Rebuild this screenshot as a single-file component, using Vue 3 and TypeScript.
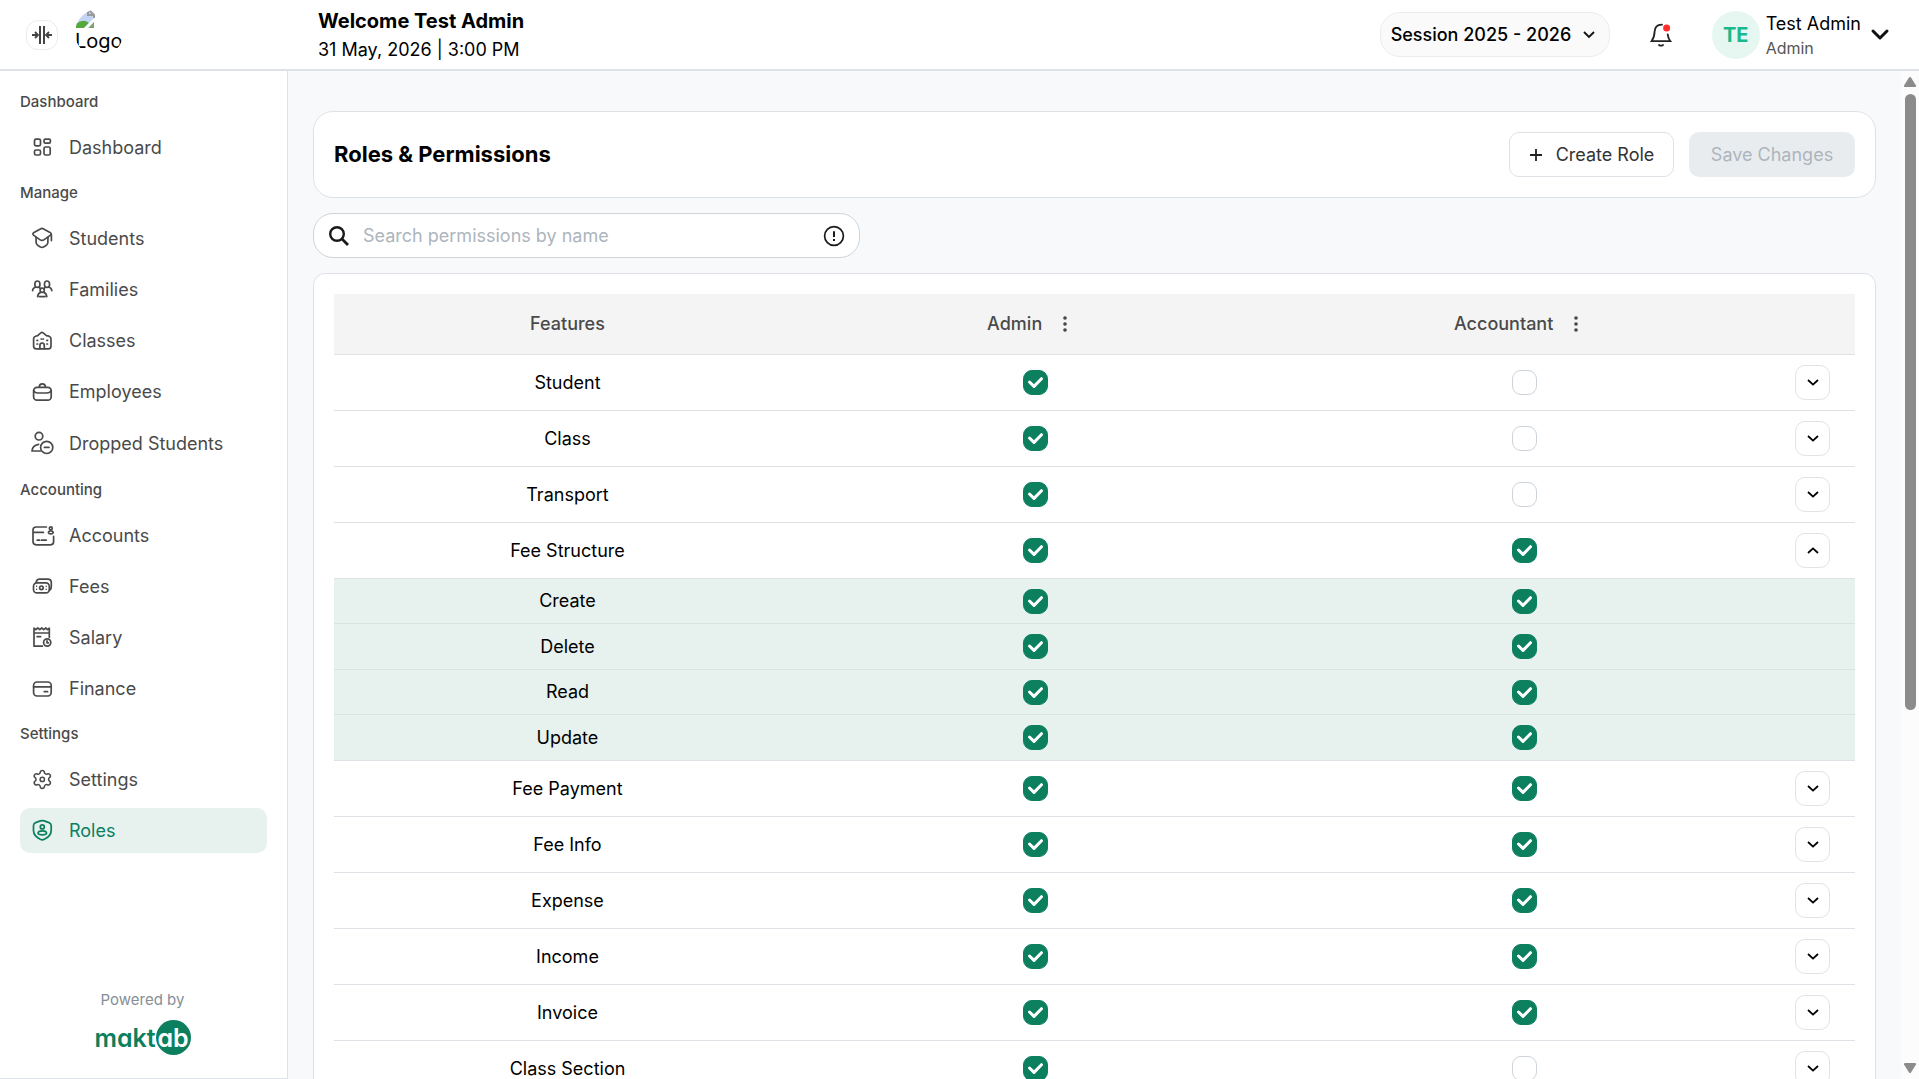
<script setup lang="ts">
import { computed, reactive, ref } from 'vue'

interface NavItem { label: string; icon: string; tall?: boolean; active?: boolean }
interface NavGroup { title: string; items: NavItem[] }
interface Action { name: string; admin: boolean; accountant: boolean }
interface Feature extends Action { open: boolean; actions: Action[] }

const icons: Record<string, string> = {
  dashboard:
    '<rect x="4.5" y="3.2" width="6" height="6.6" rx="1.6"/><rect x="14" y="3.2" width="6.4" height="4" rx="1.4"/><rect x="4.5" y="14" width="6" height="5" rx="1.5"/><rect x="14" y="11" width="6.2" height="8" rx="1.6"/>',
  students:
    '<path d="M10.4 1.9Q12 1 13.6 1.9L20 5.4Q22.2 6.8 20.2 8.4L14.2 12.6Q12 14.1 9.8 12.6L3.8 8.4Q1.9 6.8 4 5.4Z"/><path d="M6 10.4L6.2 16Q6.4 17.6 8 18.5L10.4 19.9Q12 20.7 13.6 19.9L16 18.5Q17.6 17.6 17.8 16L18 10.4M21.4 7.6V13.6"/>',
  families:
    '<path d="M4.9 7.4V5.7Q5 3 7.4 3T9.9 5.7V7.4Q9.6 9.4 7.4 9.4T4.9 7.4ZM14.5 7.4V5.7Q14.6 3 17 3T19.5 5.7V7.4Q19.2 9.4 17 9.4T14.5 7.4Z"/><circle cx="12.2" cy="12.2" r="2.1"/><path d="M2.6 12.6Q2.8 10 5.2 9.2M21.8 12.6Q21.6 10 19.2 9.2M9.3 9.4L10.4 10.6M15.1 9.4L14 10.6M7.6 18.6Q8 15.4 10.6 14.4M16.8 18.6Q16.4 15.4 13.8 14.4M9.4 18.6H15"/>',
  classes:
    '<path d="M7.6 6.6L10.8 3.9Q12 2.8 13.2 3.9L16.4 6.6L19 7.2Q21 7.8 21 9.8V17Q21 19.8 18.4 19.8H6.2Q3.6 19.8 3.6 17V9.8Q3.6 7.8 5.6 7.2Z"/><path d="M9.9 19.6V16.4Q10 14 12.1 14T14.3 16.4V19.6"/><path d="M7 11.4H7.6M7 15H7.6M16.9 11.4H17.5M16.9 15H17.5M11.1 10H11.5M13 10H13.4"/>',
  employees:
    '<rect x="3.6" y="7.4" width="17.6" height="12.8" rx="3.4"/><path d="M9.2 7.2Q9.2 3.8 12.3 3.8T15.5 7.2M3.8 10.6Q4.4 13 8 13H16.6Q20.4 13 21 10.6M10.4 13H14.2"/>',
  dropped:
    '<g transform="translate(0 -1)"><circle cx="9" cy="5.2" r="3.8"/><path d="M10.4 20H2Q2.2 14.4 8.6 13.3"/><circle cx="16.7" cy="16.4" r="6.1"/><path d="M14.4 16.4H19"/></g>',
  accounts:
    '<path d="M16.4 3H6.2Q3 3 3 6V17.6Q3 20.8 6.2 20.8H20.6Q23.6 20.8 23.6 17.8V12.4M3 8.4H13.4M7.2 16.2H9.6M11.6 16.2H16.2"/><circle cx="20.8" cy="4.3" r="1.5"/><path d="M18.4 8.6Q18.6 6.8 20.8 6.8T23.2 8.6Q23 9.9 20.8 9.9T18.4 8.6Z"/>',
  fees:
    '<rect x="3.5" y="7.8" width="15.8" height="10" rx="3.4"/><circle cx="11.4" cy="12.8" r="1.8"/><path d="M6.2 7.4Q6.6 4.2 9.6 4.2H17.8Q21.3 4.2 21.3 7.6V11.4Q21.2 14.6 19.4 15.2"/><path d="M6.6 11.2V11.4M6.6 14.2V14.4M16.2 11.2V11.4M16.2 14.2V14.4" stroke-width="1.3"/>',
  salary:
    '<path d="M12.4 20.2H4V2.2L5.8 3.6L7.8 2L9.8 3.6L11.8 2L13.8 3.6L15.8 2L17.6 3.6L19.3 2.2V11.2M4 7H19.3M7.2 10.7H10.6"/><circle cx="17.2" cy="16.5" r="3.6"/><path d="M17 14.8V16.8H18.4"/>',
  finance:
    '<rect x="3.6" y="5" width="17.6" height="14" rx="3.4"/><path d="M3.6 9.8H21.2M14.2 14.6H17.6"/>',
  settings:
    '<g transform="translate(1.5 .6) scale(.9)"><path d="M9.671 4.136a2.34 2.34 0 0 1 4.659 0 2.34 2.34 0 0 0 3.319 1.915 2.34 2.34 0 0 1 2.33 4.033 2.34 2.34 0 0 0 0 3.831 2.34 2.34 0 0 1-2.33 4.033 2.34 2.34 0 0 0-3.319 1.915 2.34 2.34 0 0 1-4.659 0 2.34 2.34 0 0 0-3.32-1.915 2.34 2.34 0 0 1-2.33-4.033 2.34 2.34 0 0 0 0-3.831A2.34 2.34 0 0 1 6.35 6.051a2.34 2.34 0 0 0 3.319-1.915Z"/><circle cx="12" cy="12" r="2.4"/></g>',
  roles:
    '<path d="M10.4 1.9Q12.3 1.2 14.2 1.9L19 3.6Q21.1 4.4 21.2 6.6V11.6Q21 17 14.4 20.3Q12.3 21.3 10.2 20.3Q3.7 17 3.5 11.6V6.6Q3.6 4.4 5.6 3.6Z"/><circle cx="12.3" cy="7.9" r="2"/><path d="M8 14.2Q8.2 11.9 12.3 11.9T16.6 14.2Q16.4 15.8 12.3 15.8T8 14.2Z"/>',
}

const nav: NavGroup[] = [
  { title: 'Dashboard', items: [{ label: 'Dashboard', icon: 'dashboard' }] },
  {
    title: 'Manage',
    items: [
      { label: 'Students', icon: 'students' },
      { label: 'Families', icon: 'families' },
      { label: 'Classes', icon: 'classes' },
      { label: 'Employees', icon: 'employees' },
      { label: 'Dropped Students', icon: 'dropped', tall: true },
    ],
  },
  {
    title: 'Accounting',
    items: [
      { label: 'Accounts', icon: 'accounts' },
      { label: 'Fees', icon: 'fees' },
      { label: 'Salary', icon: 'salary' },
      { label: 'Finance', icon: 'finance' },
    ],
  },
  {
    title: 'Settings',
    items: [
      { label: 'Settings', icon: 'settings' },
      { label: 'Roles', icon: 'roles', active: true },
    ],
  },
]

const crud = (accountant: boolean): Action[] =>
  ['Create', 'Delete', 'Read', 'Update'].map((name) => ({ name, admin: true, accountant }))

const feature = (name: string, accountant: boolean, open = false): Feature => ({
  name, admin: true, accountant, open, actions: crud(accountant),
})

const features = reactive<Feature[]>([
  feature('Student', false),
  feature('Class', false),
  feature('Transport', false),
  feature('Fee Structure', true, true),
  feature('Fee Payment', true),
  feature('Fee Info', true),
  feature('Expense', true),
  feature('Income', true),
  feature('Invoice', true),
  feature('Class Section', false),
])

const roles = [
  { key: 'admin', title: 'Admin' },
  { key: 'accountant', title: 'Accountant' },
] as const

const query = ref('')
const shown = computed(() =>
  features.filter((f) => f.name.toLowerCase().includes(query.value.trim().toLowerCase())),
)
</script>

<template>
  <div class="app">
    <header class="topbar">
      <div class="brand">
        <button class="collapse" type="button" aria-label="Collapse sidebar">
          <svg width="22" height="20" viewBox="0 0 22 20" fill="none" stroke="#444" stroke-width="2">
            <path d="M9 1V19M13 1V19" />
            <path d="M1 10H6M21 10H16M4 7L7 10L4 13M18 7L15 10L18 13" stroke-width="1.8" />
          </svg>
        </button>
        <div class="logo">
          <svg width="20" height="20" viewBox="0 0 20 20">
            <path d="M1 1H14L19 6V19H1Z" fill="#c3d4f5" />
            <path d="M1 19V15Q8 9 14 14L9 19Z" fill="#55a83a" />
            <path d="M13 19L19 12V19Z" fill="#7fa36f" />
            <path d="M8 20L20 8V12L12 20Z" fill="#fff" />
            <path d="M13 1V6H19M1 1H14L19 6V9" fill="none" stroke="#9a9a9a" stroke-width="2" />
          </svg>
          <span>Logo</span>
        </div>
      </div>
      <div class="welcome">
        <strong>Welcome Test Admin</strong>
        <span>31 May, 2026 | 3:00 PM</span>
      </div>
      <div class="session">
        <select aria-label="Session">
          <option>Session 2025 - 2026</option>
        </select>
        <svg width="12" height="8" viewBox="0 0 12 8" fill="none" stroke="#111" stroke-width="1.8"><path d="M1 1L6 6L11 1" /></svg>
      </div>
      <button class="bell" type="button" aria-label="Notifications">
        <svg width="22" height="24" viewBox="0 0 22 24" fill="none" stroke="#222" stroke-width="1.8" stroke-linecap="round">
          <path d="M12 1.6Q5 1.4 4.6 8.6Q4.6 14 1.6 18.2H20.4Q18 15 17.7 11.4M9 22Q11 23.4 13 22" />
          <circle cx="16.6" cy="5" r="3.5" fill="#ff2d2d" stroke="none" />
        </svg>
      </button>
      <button class="account" type="button">
        <span class="avatar">TE</span>
        <span class="who"><span>Test Admin</span><small>Admin</small></span>
        <svg width="18" height="12" viewBox="0 0 18 12" fill="none" stroke="#111" stroke-width="3" stroke-linecap="round" stroke-linejoin="round"><path d="M2 2L9 9L16 2" /></svg>
      </button>
    </header>

    <div class="body">
      <aside class="sidebar">
        <nav>
          <section v-for="g in nav" :key="g.title">
            <h2>{{ g.title }}</h2>
            <ul>
              <li v-for="i in g.items" :key="i.label">
                <a href="#" :class="{ active: i.active, tall: i.tall }">
                  <svg width="24" height="24" viewBox="0 0 24 24" fill="none" stroke="currentColor" stroke-width="1.7" stroke-linecap="round" stroke-linejoin="round" v-html="icons[i.icon]"></svg>
                  {{ i.label }}
                </a>
              </li>
            </ul>
          </section>
        </nav>
        <footer class="powered">
          <span>Powered by</span>
          <span class="maktab">makt<span class="disc">ab</span></span>
        </footer>
      </aside>

      <main>
        <section class="card head">
          <h1>Roles &amp; Permissions</h1>
          <button class="btn create" type="button">
            <svg width="14" height="14" viewBox="0 0 14 14" stroke="#222" stroke-width="1.8"><path d="M7 1V13M1 7H13" /></svg>
            Create Role
          </button>
          <button class="btn save" type="button" disabled>Save Changes</button>
        </section>

        <div class="search">
          <svg width="20" height="20" viewBox="0 0 20 20" fill="none" stroke="#1a1a1a" stroke-width="2.4"><circle cx="8" cy="8" r="6.8" /><path d="M12.8 12.8L19 19" stroke-width="2.8" /></svg>
          <input v-model="query" type="text" placeholder="Search permissions by name" aria-label="Search permissions by name" />
          <svg width="22" height="22" viewBox="0 0 22 22" fill="none" stroke="#1a1a1a" stroke-width="1.7"><circle cx="11" cy="11" r="9.4" /><path d="M11 6.2V12M11 14V16" stroke-width="2" /></svg>
        </div>

        <section class="card sheet">
          <table>
            <colgroup><col class="c-feature" /><col class="c-admin" /><col class="c-accountant" /><col /></colgroup>
            <thead>
              <tr>
                <th>Features</th>
                <th v-for="r in roles" :key="r.key">
                  <div class="role">
                    {{ r.title }}
                    <button type="button" :aria-label="r.title + ' options'">
                      <svg width="4" height="16" viewBox="0 0 4 16" fill="#444"><circle cx="2" cy="2" r="1.8" /><circle cx="2" cy="8" r="1.8" /><circle cx="2" cy="14" r="1.8" /></svg>
                    </button>
                  </div>
                </th>
                <th></th>
              </tr>
            </thead>
            <tbody v-for="f in shown" :key="f.name">
              <tr>
                <td>{{ f.name }}</td>
                <td v-for="r in roles" :key="r.key">
                  <label class="check">
                    <input v-model="f[r.key]" type="checkbox" :aria-label="f.name + ' ' + r.title" />
                    <svg viewBox="0 0 25 25" fill="none" stroke="#fff" stroke-width="3" stroke-linecap="round" stroke-linejoin="round"><path d="M6.5 12L11 16.4L18.5 8.7" /></svg>
                  </label>
                </td>
                <td class="end">
                  <button class="toggle" type="button" :aria-expanded="f.open" :aria-label="'Toggle ' + f.name" @click="f.open = !f.open">
                    <svg width="12" height="8" viewBox="0 0 12 8" fill="none" stroke="#000" stroke-width="1.8"><path :d="f.open ? 'M1 6L6 1.4L11 6' : 'M1 1L6 5.6L11 1'" /></svg>
                  </button>
                </td>
              </tr>
              <template v-if="f.open">
                <tr v-for="a in f.actions" :key="a.name" class="sub">
                  <td>{{ a.name }}</td>
                  <td v-for="r in roles" :key="r.key">
                    <label class="check">
                      <input v-model="a[r.key]" type="checkbox" :aria-label="f.name + ' ' + a.name + ' ' + r.title" />
                      <svg viewBox="0 0 25 25" fill="none" stroke="#fff" stroke-width="3" stroke-linecap="round" stroke-linejoin="round"><path d="M6.5 12L11 16.4L18.5 8.7" /></svg>
                    </label>
                  </td>
                  <td></td>
                </tr>
              </template>
            </tbody>
          </table>
        </section>
      </main>

      <div class="scrollbar" aria-hidden="true">
        <svg width="14" height="10" viewBox="0 0 14 10" fill="#8b8b8b"><path d="M6 .6Q7 -.4 8 .6L13 8.4Q13.4 10 12 10H2Q.6 10 1 8.4Z" /></svg>
        <div class="track"><div class="thumb"></div></div>
        <svg width="14" height="10" viewBox="0 0 14 10" fill="#8b8b8b"><path d="M6 9.4Q7 10.4 8 9.4L13 1.6Q13.4 0 12 0H2Q.6 0 1 1.6Z" /></svg>
      </div>
    </div>
  </div>
</template>

<style>
body {
  margin: 0;
  background: #f8f9fb;
}
</style>

<style scoped>
* {
  box-sizing: border-box;
}
.app {
  display: flex;
  flex-direction: column;
  height: 100vh;
  overflow: hidden;
  font-family: Inter, 'Liberation Sans', sans-serif;
  font-size: 18px;
  line-height: 24px;
  color: #000;
}
button,
input,
select {
  font: inherit;
  color: inherit;
}
button {
  padding: 0;
  border: 0;
  background: none;
}
svg {
  display: block;
  flex: none;
  overflow: visible;
}

.topbar {
  display: flex;
  flex: none;
  align-items: center;
  height: 71px;
  padding-right: 30px;
  background: #fff;
  border-bottom: 2px solid #dee2e6;
}
.brand {
  display: flex;
  align-items: center;
  gap: 17px;
  width: 288px;
  padding-left: 26px;
}
.collapse {
  display: grid;
  place-items: center;
  width: 32px;
  height: 30px;
  border: 1px solid #ebebeb;
  border-radius: 12px;
}
.logo {
  width: 48px;
  height: 48px;
  margin-top: -4px;
  overflow: hidden;
  border-radius: 50%;
}
.logo span {
  display: block;
  font-size: 20px;
}
.welcome {
  display: flex;
  flex: 1;
  flex-direction: column;
  gap: 5px;
  padding: 2px 0 0 30px;
}
.welcome strong {
  font-size: 20px;
  font-weight: 700;
}
.session {
  display: grid;
  align-items: center;
  width: 230px;
  font-weight: 500;
}
.session > * {
  grid-area: 1 / 1;
}
.session svg {
  justify-self: end;
  margin-right: 15px;
  pointer-events: none;
}
.session select {
  width: 100%;
  height: 45px;
  padding: 0 10px;
  appearance: none;
  background: #fafafa;
  border: 1px solid #ececec;
  border-radius: 20px;
}
.bell {
  margin: 0 40px;
}
.account {
  display: flex;
  align-items: center;
  text-align: left;
}
.avatar {
  display: grid;
  place-items: center;
  width: 48px;
  height: 48px;
  margin-right: 6px;
  font-size: 20px;
  font-weight: 700;
  color: #1bb88e;
  background: #e6f7f1;
  border-radius: 50%;
}
.who {
  display: flex;
  flex-direction: column;
  margin-right: 10px;
  padding-top: 2px;
}
.who small {
  font-size: 16px;
  color: #555;
}

.body {
  display: flex;
  flex: 1;
  min-height: 0;
}
.sidebar {
  display: flex;
  flex: none;
  flex-direction: column;
  justify-content: space-between;
  width: 288px;
  padding: 8px 20px 23px;
  color: #4a4a4a;
  background: #fff;
  border-right: 1px solid #dee2e6;
  border-bottom: 1px solid #dee2e6;
}
.sidebar h2 {
  margin: 0;
  padding: 13px 0;
  font-size: 15px;
  font-weight: 500;
  line-height: 20px;
}
.sidebar ul {
  display: flex;
  flex-direction: column;
  gap: 6px;
  margin: 0;
  padding: 0;
  list-style: none;
}
.sidebar a {
  display: flex;
  align-items: center;
  gap: 15px;
  height: 45px;
  padding: 0 10px;
  color: inherit;
  text-decoration: none;
  border-radius: 10px;
}
.sidebar a.tall {
  height: 47px;
}
.sidebar a.active {
  color: #0c7f5f;
  background: #e7f1ee;
}
.powered {
  display: flex;
  flex-direction: column;
  align-items: center;
  gap: 8px;
  padding-right: 2px;
  font-size: 15px;
  color: #868e96;
}
.maktab {
  display: flex;
  align-items: center;
  font-size: 25px;
  font-weight: 600;
  font-feature-settings: 'cv11';
  color: #0c7f5f;
}
.disc {
  display: grid;
  place-items: center;
  width: 35px;
  height: 35px;
  color: #fff;
  background: #0c7f5f;
  border-radius: 50%;
}

main {
  flex: 1;
  min-width: 0;
  padding: 40px 25px 0;
  overflow: hidden;
}
.card {
  padding: 20px;
  background: #fff;
  border: 1px solid #dee2e6;
}
.head {
  display: flex;
  align-items: center;
  gap: 15px;
  border-radius: 20px;
}
.head h1 {
  flex: 1;
  margin: 0;
  padding-bottom: 2px;
  font-size: 22px;
  font-weight: 700;
}
.btn {
  display: flex;
  align-items: center;
  justify-content: center;
  height: 45px;
  border-radius: 10px;
}
.create {
  gap: 13px;
  width: 165px;
  color: #333;
  border: 1px solid #dee2e6;
}
.save {
  width: 166px;
  color: #adb5bd;
  background: #e9ecef;
}
.search {
  display: flex;
  align-items: center;
  gap: 14px;
  width: 35%;
  height: 45px;
  margin: 15px 0;
  padding: 0 14px 0 15px;
  background: #fff;
  border: 1px solid #ced4da;
  border-radius: 20px;
}
.search input {
  flex: 1;
  min-width: 0;
  padding: 0;
  background: none;
  border: 0;
  outline: 0;
}
.search input::placeholder {
  color: #adb5bd;
  opacity: 1;
}
.sheet {
  border-radius: 12px;
}
table {
  width: 100%;
  table-layout: fixed;
  border-spacing: 0;
}
.c-feature {
  width: 30.7%;
}
.c-admin {
  width: 30.8%;
}
.c-accountant {
  width: 33.5%;
}
th,
td {
  height: 56px;
  padding: 0;
  text-align: center;
  border-bottom: 1px solid #dee2e6;
}
th {
  height: 61px;
  font-weight: 500;
  color: #4a4a4a;
  background: #f4f4f4;
}
.role {
  display: flex;
  align-items: center;
  justify-content: center;
  gap: 5px;
}
.role button {
  display: grid;
  place-items: center;
  width: 36px;
  height: 36px;
}
.sub td {
  height: 46px;
  background: #e7f1ee;
  border-color: #d9e3e1;
}
.sub:nth-child(even) td {
  height: 45px;
}
.sub:last-child td {
  border-color: #dee2e6;
}
.end {
  padding-right: 25px;
}
.toggle {
  display: grid;
  place-items: center;
  width: 35px;
  height: 35px;
  margin-left: auto;
  border: 1px solid #e3e3e6;
  border-radius: 10px;
}
.check {
  display: inline-grid;
  vertical-align: middle;
}
.check > * {
  grid-area: 1 / 1;
  width: 25px;
  height: 25px;
  margin: 0;
}
.check svg {
  visibility: hidden;
  pointer-events: none;
}
.check input {
  appearance: none;
  background: #fff;
  border: 1px solid #ced4da;
  border-radius: 9px;
}
.check input:checked {
  background: #0c7f5f;
  border-color: #0c7f5f;
}
.check input:checked + svg {
  visibility: visible;
}

.scrollbar {
  display: flex;
  flex: none;
  flex-direction: column;
  gap: 7px;
  align-items: center;
  width: 18px;
  padding: 6px 0;
  background: #fcfcfc;
}
.track {
  flex: 1;
}
.thumb {
  width: 11px;
  height: 64%;
  background: #8b8b8b;
  border-radius: 6px;
}
</style>
